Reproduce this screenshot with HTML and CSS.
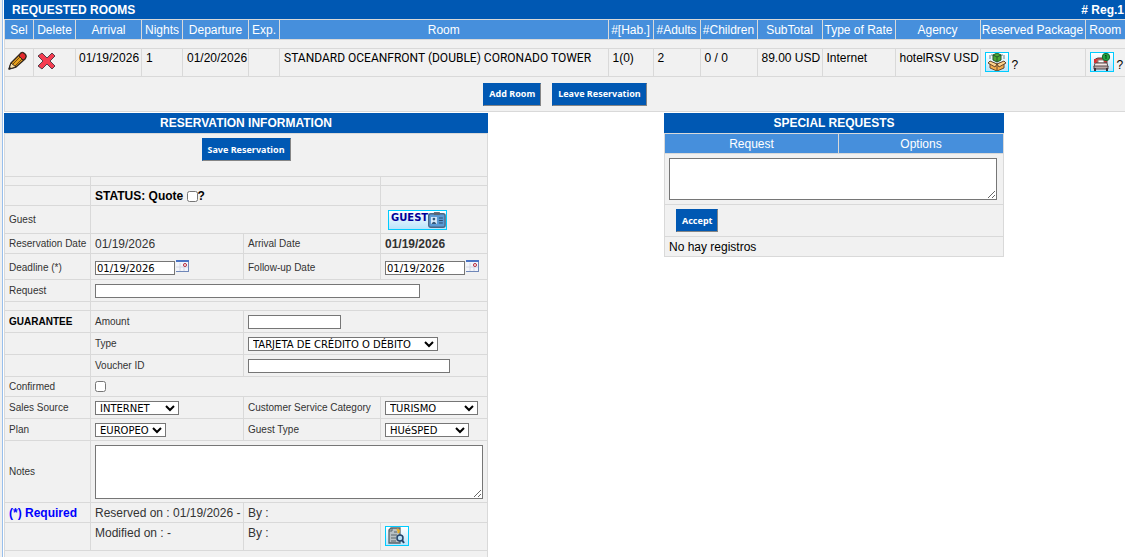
FILE: index.html
```html
<!DOCTYPE html>
<html lang="en">
<head>
<meta charset="utf-8">
<title>Reservation</title>
<link rel="stylesheet" href="styles.css">
</head>
<body>
<main class="page">
  <section class="rooms">
    <h2 class="bar bar-split"><span>REQUESTED ROOMS</span><span># Reg.1</span></h2>
    <table class="grid rooms-table">
      <colgroup>
        <col class="c-sel"><col class="c-delete"><col class="c-date"><col class="c-nights"><col class="c-date"><col class="c-exp"><col><col class="c-hab"><col class="c-adults"><col class="c-children"><col class="c-total"><col class="c-rate"><col class="c-agency"><col class="c-package"><col class="c-room">
      </colgroup>
      <thead>
        <tr><th>Sel</th><th>Delete</th><th>Arrival</th><th>Nights</th><th>Departure</th><th>Exp.</th><th>Room</th><th>#[Hab.]</th><th>#Adults</th><th>#Children</th><th>SubTotal</th><th>Type of Rate</th><th>Agency</th><th>Reserved Package</th><th>Room</th></tr>
      </thead>
      <tbody>
        <tr class="row-gap"><td colspan="15"></td></tr>
        <tr class="row-icon room-row">
          <td><button class="plain" type="button" aria-label="Select"><svg width="20" height="20" viewBox="0 0 20 20"><path d="M1 18 3 12 12 3Q14 0 17 3 19 5 17 8L8 16Z" fill="#eaa21b" stroke="#33271d" stroke-width="1.4" stroke-linejoin="round"/><path d="M12 3Q14 0 17 3 19 5 17 8L15 9 11 5Z" fill="#e3282c" stroke="#33271d"/><path d="M5 13 12 6M7 15 14 8" stroke="#744b12" fill="none"/><path d="M3 12 8 16 1 18Z" fill="#f7dda5" stroke="#33271d"/><path d="M1.500 15.500 4 18H1Z" fill="#222"/></svg></button></td>
          <td><button class="plain" type="button" aria-label="Delete"><svg width="20" height="20" viewBox="0 0 20 20"><path d="M5 2 10 7 15 2 18 5 13 10 18 15 15 18 10 13 5 18 1 15 6 10 1 5Z" fill="#f53d51" stroke="#57404a" stroke-width="1" stroke-linejoin="round"/></svg></button></td>
          <td>01/19/2026</td><td>1</td><td>01/20/2026</td><td></td><td class="room-name">STANDARD OCEANFRONT (DOUBLE) CORONADO TOWER</td><td>1(0)</td><td>2</td><td>0 / 0</td><td>89.00 USD</td><td>Internet</td><td>hotelRSV USD</td>
          <td><div class="icon-line"><button class="icon-box" type="button" aria-label="Reserved package"><svg width="22" height="18" viewBox="0 0 22 18"><path d="M4 2v4M18 2v4M6 1v2M16 1v2" stroke="#6b8b95"/><path d="M7 2 11 0 15 2V7L11 9 7 7Z" fill="#48a832" stroke="#24552a"/><path d="M7 2 11 4 15 2M11 4V9" stroke="#24552a" fill="none"/><path d="M4 9 11 11 18 9V15L11 18 4 15Z" fill="#f3ad4c" stroke="#66482d"/><path d="M4 8 11 11 9 14 2 10ZM18 8 11 11 13 14 20 10Z" fill="#ffd28a" stroke="#66482d"/><path d="M11 11V18" stroke="#66482d"/></svg></button>?</div></td>
          <td><div class="icon-line"><button class="icon-box" type="button" aria-label="Room"><svg width="22" height="18" viewBox="0 0 22 18"><path d="M4 10V8Q4 5 7 5H13Q16 5 16 8V10Z" fill="#d4463f" stroke="#60423f"/><path d="M7 7H13V10H7Z" fill="#fff" stroke="#8b8180"/><path d="M4 10H16L17 14H3Z" fill="#f4e7e4" stroke="#58494b"/><path d="M3 13H17V16H3Z" fill="#b9aaa9" stroke="#58494b"/><path d="M4 15V18M16 15V18" stroke="#3f3036" stroke-width="2"/><path d="M4 6V10M13 8 16 7" stroke="#d92f2f" stroke-width="2"/><circle cx="15" cy="4" r="3.700" fill="#20a641" stroke="#14672e"/><path d="M14 3 15 2V6" stroke="#063f1c" fill="none"/></svg></button>?</div></td>
        </tr>
        <tr class="row-actions"><td colspan="15"><div class="actions"><button class="btn" type="button">Add Room</button><button class="btn" type="button">Leave Reservation</button></div></td></tr>
      </tbody>
    </table>
  </section>

  <div class="panels">
    <form class="reservation">
      <h2 class="bar">RESERVATION INFORMATION</h2>
      <table class="grid form-table">
        <colgroup><col class="f-label"><col class="f-value"><col class="f-label2"><col></colgroup>
        <tbody>
          <tr class="row-save"><td colspan="4"><div class="actions"><button class="btn" type="button">Save Reservation</button></div></td></tr>
          <tr class="row-gap"><td></td><td colspan="2"></td><td></td></tr>
          <tr class="row-text"><td></td><td colspan="2" class="status"><label for="quote">STATUS: Quote</label> <input id="quote" type="checkbox">?</td><td></td></tr>
          <tr class="row-icon"><td class="small">Guest</td><td colspan="2"></td><td><a class="icon-box guest" href="#guest">GUEST<svg width="18" height="18" viewBox="0 0 18 18"><rect x=".7" y="2.7" width="16.6" height="13.6" rx="2" fill="#5b9bd5" stroke="#4a6785" stroke-width="1.4"/><path d="M6 1H12V4H6Z" fill="#596675"/><rect x="3" y="6" width="6" height="7" fill="#d9ecfb"/><circle cx="6" cy="8" r="1.4" fill="#345779"/><path d="M3.5 13Q6 8.500 8.500 13Z" fill="#345779"/><path d="M11 7H15M11 9.500H15M11 12H15" stroke="#294c70"/></svg></a></td></tr>
          <tr class="row-text"><td class="small">Reservation Date</td><td>01/19/2026</td><td class="small">Arrival Date</td><td><strong>01/19/2026</strong></td></tr>
          <tr class="row-date"><td class="small"><label for="deadline">Deadline (*)</label></td>
            <td><input id="deadline" class="field w-date" type="text" value="01/19/2026"><button class="plain cal" type="button" aria-label="Pick deadline"><svg width="13" height="12" viewBox="0 0 13 12"><path d="M0 0H13V12H0Z" fill="#6f87b8"/><path d="M0 0H13V2H0Z" fill="#4a73c4"/><path d="M0 2H12V11H0Z" fill="#f3f5fb"/><path d="M0 7H12M4 3V11M8 3V11" stroke="#d2d7e4"/><circle cx="9" cy="5" r="1.500" fill="#fff" stroke="#b6273b"/></svg></button></td>
            <td class="small"><label for="followup">Follow-up Date</label></td>
            <td><input id="followup" class="field w-date" type="text" value="01/19/2026"><button class="plain cal" type="button" aria-label="Pick follow-up date"><svg width="13" height="12" viewBox="0 0 13 12"><path d="M0 0H13V12H0Z" fill="#6f87b8"/><path d="M0 0H13V2H0Z" fill="#4a73c4"/><path d="M0 2H12V11H0Z" fill="#f3f5fb"/><path d="M0 7H12M4 3V11M8 3V11" stroke="#d2d7e4"/><circle cx="9" cy="5" r="1.500" fill="#fff" stroke="#b6273b"/></svg></button></td></tr>
          <tr class="row-field"><td class="small"><label for="request">Request</label></td><td colspan="3"><input id="request" class="field w-request" type="text"></td></tr>
          <tr class="row-gap"><td></td><td colspan="3"></td></tr>
          <tr class="row-field"><td class="small heading">GUARANTEE</td><td class="small"><label for="amount">Amount</label></td><td colspan="2"><input id="amount" class="field w-medium" type="text"></td></tr>
          <tr class="row-field"><td></td><td class="small"><label for="type">Type</label></td><td colspan="2"><select id="type" class="field w-type"><option>TARJETA DE CRÉDITO O DÉBITO</option></select></td></tr>
          <tr class="row-field"><td></td><td class="small"><label for="voucher">Voucher ID</label></td><td colspan="2"><input id="voucher" class="field w-voucher" type="text"></td></tr>
          <tr class="row-text"><td class="small"><label for="confirmed">Confirmed</label></td><td colspan="3"><input id="confirmed" class="block" type="checkbox"></td></tr>
          <tr class="row-field"><td class="small"><label for="source">Sales Source</label></td><td><select id="source" class="field w-select"><option>INTERNET</option></select></td><td class="small"><label for="category">Customer Service Category</label></td><td><select id="category" class="field w-medium"><option>TURISMO</option></select></td></tr>
          <tr class="row-field"><td class="small"><label for="plan">Plan</label></td><td><select id="plan" class="field w-plan"><option>EUROPEO</option></select></td><td class="small"><label for="guesttype">Guest Type</label></td><td><select id="guesttype" class="field w-select"><option>HUéSPED</option></select></td></tr>
          <tr class="row-notes"><td class="small"><label for="notes">Notes</label></td><td colspan="3"><textarea id="notes" class="notes"></textarea></td></tr>
          <tr class="row-text"><td class="required">(*) Required</td><td class="line">Reserved on : 01/19/2026 -</td><td colspan="2">By :</td></tr>
          <tr class="row-icon top"><td></td><td>Modified on : -</td><td>By :</td><td><button class="icon-box" type="button" aria-label="View log"><svg width="22" height="18" viewBox="0 0 22 18"><path d="M5 1H14V16H3V3Z" fill="#b8c0c4" stroke="#596268" stroke-width="1.300"/><path d="M3 4H6V1M8 5H11M5 8H11M5 11H10M5 14H10" stroke="#59656b" fill="none"/><path d="M11 2 13 4 12 6" stroke="#e5ad24" stroke-width="2" fill="none"/><circle cx="14" cy="11" r="3" fill="#b9def4" stroke="#244268" stroke-width="1.500"/><path d="M16 13 18 16" stroke="#244268" stroke-width="2"/></svg></button></td></tr>
          <tr class="row-tail"><td colspan="4"></td></tr>
        </tbody>
      </table>
    </form>

    <form class="requests">
      <h2 class="bar">SPECIAL REQUESTS</h2>
      <table class="grid">
        <thead><tr><th>Request</th><th class="r-options">Options</th></tr></thead>
        <tbody>
          <tr class="row-message"><td colspan="2"><textarea class="message" aria-label="Special request"></textarea></td></tr>
          <tr class="row-accept"><td colspan="2"><button class="btn accept" type="button">Accept</button></td></tr>
          <tr class="row-text"><td colspan="2" class="dark">No hay registros</td></tr>
        </tbody>
      </table>
    </form>
  </div>
</main>
</body>
</html>
```
FILE: styles.css
```css
* { box-sizing: border-box; }
html { background: #f0f0f0; }
body {
  margin: 0 0 0 2px;
  min-height: 100vh;
  padding-left: 1px;
  border-left: 1px solid #98bfec;
  background: #fff;
  color: #333;
  font: 12px/14px "Liberation Sans", Arial, sans-serif;
}
.bar {
  margin: 0;
  height: 20px;
  background: #0058b3;
  color: #fff;
  font-size: 12px;
  line-height: 20px;
  text-align: center;
}
.bar-split { display: flex; justify-content: space-between; height: 19px; padding: 0 1px 0 8px; }

.grid { width: 100%; border-collapse: collapse; table-layout: fixed; background: #f1f1f1; }
.grid th, .grid td { border: 1px solid #d9d9d9; padding: 0 4px; text-align: left; }
.grid th {
  height: 20px;
  padding: 0;
  background: #468fdc;
  color: #fff;
  font-weight: normal;
  text-align: center;
  white-space: nowrap;
}
.rooms-table th:last-child, .rooms-table td:last-child { border-right: 0; }
.c-sel { width: 29px; }
.c-delete { width: 42px; }
.c-date { width: 66px; }
.c-nights { width: 41px; }
.c-exp { width: 31px; }
.c-hab { width: 45px; }
.c-adults { width: 47px; }
.c-children { width: 57px; }
.c-total { width: 65px; }
.c-rate { width: 73px; }
.c-agency { width: 85px; }
.c-package { width: 105px; }
.c-room { width: 40px; }

.row-gap { height: 9px; }
.row-text { height: 20px; }
.row-field { height: 22px; }
.row-date { height: 26px; }
.row-icon { height: 28px; }
.row-actions { height: 35px; }
.row-save { height: 43px; }
.row-notes { height: 62px; }
.row-message { height: 51px; }
.row-accept { height: 32px; }
.row-tail { height: 7px; }
.grid .row-tail td { border-bottom: 0; }

.rooms-table .room-row td { padding: 2px 0 0 4px; vertical-align: top; color: #000; white-space: nowrap; }
.rooms-table .room-row td:nth-child(-n+3) { padding-left: 3px; }
.rooms-table .room-name { font-family: Roboto, "Liberation Sans", sans-serif; }
.icon-line { display: flex; align-items: flex-end; gap: 3px; padding-top: 1px; }
.actions { display: flex; justify-content: center; gap: 11px; }
.row-save td { vertical-align: top; padding-top: 4px; }

.btn {
  height: 23px;
  padding: 0 5px;
  border: 1px solid #0058b3;
  border-right-color: #858585;
  border-bottom-color: #858585;
  background: #0058b3;
  color: #fff;
  font: bold 9px/14px "Noto Sans", "Open Sans", sans-serif;
}
.accept { margin-left: 7px; }
.plain { display: block; padding: 0; border: 0; background: none; }
.plain svg, .icon-box svg { display: block; }
.cal { display: inline-block; margin-left: 1px; }
.icon-box {
  display: block;
  height: 20px;
  padding: 0;
  border: 1px solid #00ccff;
  background: linear-gradient(#fff, #b9e4fb);
}
.guest {
  display: flex;
  justify-content: space-between;
  width: 59px;
  margin-left: 3px;
  padding-left: 2px;
  color: #009;
  font: bold 10px/14px "DejaVu Sans", sans-serif;
  text-decoration: none;
}

.panels { display: flex; align-items: flex-start; gap: 176px; padding-top: 1px; }
.reservation { width: 484px; }
.requests { width: 340px; }
.f-label { width: 86px; }
.f-value { width: 153px; }
.f-label2 { width: 137px; }
.r-options { width: 165px; }
.grid .small { padding-right: 0; font-size: 10px; line-height: 14px; white-space: nowrap; }
.grid .heading { color: #000; font-weight: bold; }
.grid .status { color: #000; font-weight: bold; line-height: 14px; }
.grid .required { color: #00f; font-weight: bold; }
.grid .dark { color: #000; }
.grid .line { padding-right: 0; white-space: nowrap; }
.grid .top td { vertical-align: top; padding-top: 3px; }

input[type="checkbox"] { width: 11px; height: 11px; margin: 0; vertical-align: -2px; }
input.block { display: block; }
.field {
  height: 14px;
  padding: 0 1px;
  border: 1px solid #767676;
  border-radius: 0;
  background-color: #fff;
  color: #000;
  font: 10px/12px "DejaVu Sans", Verdana, sans-serif;
}
input.field, select.field { vertical-align: middle; }
select.field { padding: 0; }
.row-date .field { vertical-align: baseline; }
.grid .row-date td { padding-top: 2px; white-space: nowrap; }
.w-date { width: 80px; }
.w-request { width: 325px; }
.w-medium { width: 93px; }
.w-type { width: 190px; }
.w-voucher { width: 202px; }
.w-select { width: 84px; }
.w-plan { width: 71px; }
textarea { display: block; margin: 0; padding: 2px; border: 1px solid #767676; background: #fff; font: 12px/14px "Liberation Sans", sans-serif; }
.notes { width: 388px; height: 54px; }
.message { width: 328px; height: 42px; }
```
